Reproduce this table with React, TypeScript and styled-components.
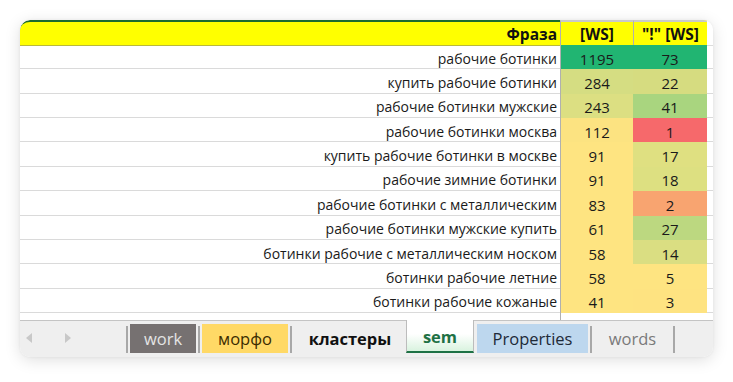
import React from "react";
import styled, { createGlobalStyle, css } from "styled-components";

const GlobalStyle = createGlobalStyle`
  html, body { margin: 0; padding: 0; background: #ffffff; }
  body { font-family: "Open Sans", "Noto Sans", sans-serif; }
`;

const Page = styled.div`
  width: 733px;
  height: 382px;
  padding: 20px 20px 25px 20px;
  box-sizing: border-box;
`;

const Card = styled.div`
  width: 693px;
  height: 337px;
  border-radius: 10px;
  background: #ffffff;
  box-shadow: 0 3px 16px rgba(0, 0, 0, 0.13), 0 0 3px rgba(0, 0, 0, 0.06);
  overflow: hidden;
  display: flex;
  flex-direction: column;
`;

const Table = styled.div`
  display: grid;
  grid-template-rows: 25px repeat(11, 1fr) 7px;
  height: 300px;
`;

const Row = styled.div`
  display: grid;
  grid-template-columns: 540px 73px 74px 1fr;
`;

const HeadCell = styled.div<{ $first?: boolean; $blank?: boolean }>`
  background: ${(p) => (p.$blank ? "#ffffff" : "#ffff00")};
  border-top: 2px solid ${(p) => (p.$first ? "#1d6a30" : p.$blank ? "#ffffff" : "#c9c9c9")};
  border-bottom: 1px solid ${(p) => (p.$blank ? "#dcdcdc" : "#b9b93a")};
  ${(p) => !p.$first && !p.$blank && css`border-left: 1px solid #b0b0b0;`}
  ${(p) => p.$first && css`border-top-left-radius: 10px;`}
  display: flex;
  align-items: center;
  justify-content: ${(p) => (p.$first ? "flex-end" : "center")};
  padding-right: ${(p) => (p.$first ? "3px" : "0")};
  padding-top: 1px;
  font-size: 15.5px;
  font-weight: 700;
  color: #111;
  box-sizing: border-box;
  white-space: nowrap;
`;

const Phrase = styled.div`
  border-bottom: 1px solid #dadada;
  display: flex;
  align-items: center;
  justify-content: flex-end;
  padding-right: 3px;
  padding-top: 3px;
  font-size: 14px;
  color: #1a1a1a;
  white-space: nowrap;
  box-sizing: border-box;
`;

const Num = styled.div<{ $bg: string; $sep?: boolean }>`
  background: ${(p) => p.$bg};
  ${(p) => p.$sep && css`border-left: 1px solid #b0b0b0;`}
  display: flex;
  align-items: center;
  justify-content: center;
  padding-top: 3px;
  font-size: 15px;
  color: #1a1a1a;
`;

const Blank = styled.div<{ $line?: boolean }>`
  ${(p) => p.$line && css`border-bottom: 1px solid #dadada;`}
  box-sizing: border-box;
`;

const Filler = styled.div<{ $sep?: boolean }>`
  background: #ffffff;
  ${(p) => p.$sep && css`border-left: 1px solid #b0b0b0;`}
`;

const TabBar = styled.div`
  flex: 1;
  background: #efefef;
  border-top: 1px solid #c4c4c4;
  display: flex;
  align-items: stretch;
  box-sizing: border-box;
`;

const Arrows = styled.div`
  width: 104px;
  display: flex;
  align-items: center;
  padding-left: 6px;
  gap: 33px;
  box-sizing: border-box;
  padding-bottom: 2px;
`;

const Arrow = styled.span<{ $dir: "left" | "right" }>`
  width: 0;
  height: 0;
  border-top: 5px solid transparent;
  border-bottom: 5px solid transparent;
  ${(p) =>
    p.$dir === "left"
      ? css`border-right: 6px solid #c8c8c8;`
      : css`border-left: 6px solid #c8c8c8;`}
`;

const Sep = styled.span`
  width: 2px;
  background: #a8a8a8;
  margin: 5px 2px 4px 2px;
`;

const Tab = styled.div<{ $bg?: string; $color: string; $bold?: boolean; $w: number }>`
  width: ${(p) => p.$w}px;
  margin: 3px 0 4px 0;
  background: ${(p) => p.$bg || "transparent"};
  color: ${(p) => p.$color};
  font-weight: ${(p) => (p.$bold ? 700 : 400)};
  font-size: 16.5px;
  display: flex;
  align-items: center;
  justify-content: center;
  box-sizing: border-box;
  white-space: nowrap;
`;

const ActiveTab = styled.div`
  width: 68px;
  margin-top: -1px;
  margin-bottom: 4px;
  border-left: 1px solid #bcbcbc;
  border-right: 1px solid #bcbcbc;
  border-bottom: 2px solid #1e7145;
  background: linear-gradient(to bottom, #ffffff 0%, #ffffff 45%, #d9f3df 100%);
  color: #1e7145;
  font-weight: 700;
  font-size: 16.5px;
  display: flex;
  align-items: center;
  justify-content: center;
  box-sizing: border-box;
  padding-top: 2px;
  margin-right: 3px;
`;

type Item = { phrase: string; ws: number; wsBg: string; ex: number; exBg: string };

const Y = "#fee481";

const rows: Item[] = [
  { phrase: "рабочие ботинки", ws: 1195, wsBg: "#21b572", ex: 73, exBg: "#21b572" },
  { phrase: "купить рабочие ботинки", ws: 284, wsBg: "#d5dd82", ex: 22, exBg: "#d6dc80" },
  { phrase: "рабочие ботинки мужские", ws: 243, wsBg: "#dcdf82", ex: 41, exBg: "#a9d57f" },
  { phrase: "рабочие ботинки москва", ws: 112, wsBg: "#fce381", ex: 1, exBg: "#f6696b" },
  { phrase: "купить рабочие ботинки в москве", ws: 91, wsBg: Y, ex: 17, exBg: "#dfe081" },
  { phrase: "рабочие зимние ботинки", ws: 91, wsBg: Y, ex: 18, exBg: "#dde081" },
  { phrase: "рабочие ботинки с металлическим", ws: 83, wsBg: Y, ex: 2, exBg: "#f8a470" },
  { phrase: "рабочие ботинки мужские купить", ws: 61, wsBg: Y, ex: 27, exBg: "#bcd880" },
  { phrase: "ботинки рабочие с металлическим носком", ws: 58, wsBg: Y, ex: 14, exBg: "#dade82" },
  { phrase: "ботинки рабочие летние", ws: 58, wsBg: Y, ex: 5, exBg: "#fee481" },
  { phrase: "ботинки рабочие кожаные", ws: 41, wsBg: Y, ex: 3, exBg: "#fee381" },
];

export default function App() {
  return (
    <>
      <GlobalStyle />
      <Page>
        <Card>
          <Table>
            <Row>
              <HeadCell $first>Фраза</HeadCell>
              <HeadCell>[WS]</HeadCell>
              <HeadCell>"!" [WS]</HeadCell>
              <HeadCell $blank />
            </Row>
            {rows.map((r) => (
              <Row key={r.phrase}>
                <Phrase>{r.phrase}</Phrase>
                <Num $bg={r.wsBg} $sep>
                  {r.ws}
                </Num>
                <Num $bg={r.exBg}>{r.ex}</Num>
                <Blank $line />
              </Row>
            ))}
            <Row>
              <Blank />
              <Filler $sep />
              <Filler />
              <Blank />
            </Row>
          </Table>
          <TabBar>
            <Arrows>
              <Arrow $dir="left" />
              <Arrow $dir="right" />
            </Arrows>
            <Sep />
            <Tab $w={66} $bg="#767171" $color="#e4e4e4">work</Tab>
            <Sep />
            <Tab $w={86} $bg="#ffd966" $color="#3b2c00">морфо</Tab>
            <Sep />
            <Tab $w={112} $color="#111" $bold>кластеры</Tab>
            <ActiveTab>sem</ActiveTab>
            <Tab $w={111} $bg="#bdd7ee" $color="#1d2a38">Properties</Tab>
            <Sep />
            <Tab $w={77} $color="#7a7a7a">words</Tab>
            <Sep />
          </TabBar>
        </Card>
      </Page>
    </>
  );
}
